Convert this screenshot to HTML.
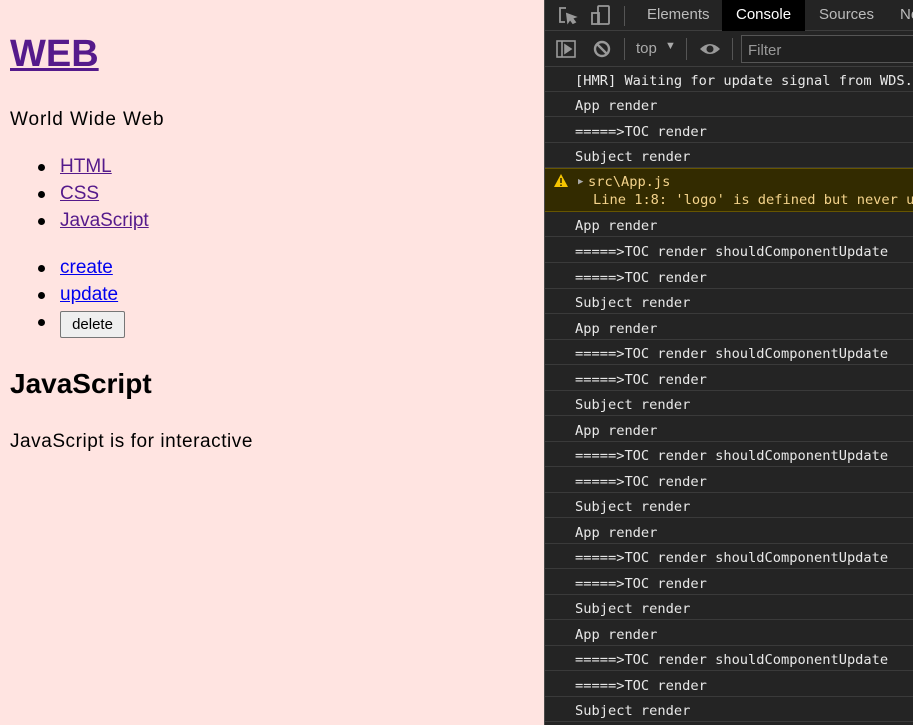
<!DOCTYPE html>
<html><head><meta charset="utf-8"><style>
*{margin:0;padding:0;box-sizing:border-box}
body{width:913px;height:725px;overflow:hidden;background:#ffe4e1;font-family:"Liberation Sans","Noto Sans CJK KR",sans-serif;position:relative}
.a{position:absolute;white-space:nowrap}
.v{color:#551a8b;text-decoration:underline}
.b{color:#0000ee;text-decoration:underline}
.dot{position:absolute;width:7px;height:7px;border-radius:50%;background:#000}
#dt{position:absolute;left:544px;top:0;width:369px;height:725px;background:#242424;border-left:1px solid #4a4a4a;color:#e8e8e8;font-family:"DejaVu Sans Mono","Liberation Mono",monospace;font-size:13.7px}
.row{position:absolute;left:0;width:369px;border-bottom:1px solid #3a3a3a;padding-left:30px;padding-top:2px;white-space:nowrap;overflow:hidden}
</style></head><body>
<div class="a v" style="left:10px;top:29px;font-size:38px;font-weight:bold;line-height:50px">WEB</div>
<div class="a" style="left:10px;top:109px;font-size:19px;letter-spacing:0.9px">World Wide Web</div>
<div class="dot" style="left:38px;top:164px"></div><div class="a v" style="left:60px;top:156px;font-size:19px">HTML</div>
<div class="dot" style="left:38px;top:191px"></div><div class="a v" style="left:60px;top:183px;font-size:19px">CSS</div>
<div class="dot" style="left:38px;top:218px"></div><div class="a v" style="left:60px;top:210px;font-size:19px">JavaScript</div>
<div class="dot" style="left:38px;top:265px"></div><div class="a b" style="left:60px;top:257px;font-size:19px">create</div>
<div class="dot" style="left:38px;top:292px"></div><div class="a b" style="left:60px;top:284px;font-size:19px">update</div>
<div class="dot" style="left:38px;top:319px"></div>
<div class="a" style="left:60px;top:311px;width:65px;height:27px;border:1px solid #767676;border-radius:2px;background:#efefef;font-size:15px;text-align:center;line-height:25px">delete</div>
<div class="a" style="left:10px;top:368px;font-size:28px;font-weight:bold">JavaScript</div>
<div class="a" style="left:10px;top:431px;font-size:19px;letter-spacing:0.55px">JavaScript is for interactive</div>

<div id="dt">
<div style="position:absolute;left:0;top:0;width:369px;height:31px;border-bottom:1px solid #3d3d3d;font-family:'Liberation Sans',sans-serif;font-size:15px;color:#bbb">
<svg style="position:absolute;left:13px;top:6px" width="20" height="20" viewBox="0 0 20 20" fill="none" stroke="#999" stroke-width="1.8"><path d="M8 2H2v14h5"/><path d="M9 8l8 3-3 1 3 4-2 1-3-4-2 3z" fill="#999"/></svg>
<svg style="position:absolute;left:45px;top:4px" width="22" height="22" viewBox="0 0 22 22" fill="none" stroke="#999" stroke-width="1.8"><rect x="8" y="2" width="11" height="18" rx="1"/><rect x="2" y="9" width="7" height="11"/></svg>
<div style="position:absolute;left:79px;top:6px;width:1px;height:20px;background:#555"></div>
<div class="a" style="left:102px;top:6px">Elements</div>
<div style="position:absolute;left:177px;top:0;width:83px;height:31px;background:#000"></div>
<div class="a" style="left:191px;top:6px;color:#fff">Console</div>
<div class="a" style="left:274px;top:6px">Sources</div>
<div class="a" style="left:355px;top:6px">Ne</div>
</div>
<div style="position:absolute;left:0;top:32px;width:369px;height:35px;border-bottom:1px solid #3d3d3d;font-family:'Liberation Sans',sans-serif;color:#aaa">
<svg style="position:absolute;left:11px;top:8px" width="20" height="18" viewBox="0 0 20 18" fill="none" stroke="#999" stroke-width="1.6"><rect x="1" y="1" width="18" height="16"/><path d="M6 1v16"/><path d="M9 5l6 4-6 4z" fill="#999"/></svg>
<svg style="position:absolute;left:48px;top:8px" width="18" height="18" viewBox="0 0 18 18" fill="none" stroke="#999" stroke-width="2.4"><circle cx="9" cy="9" r="7"/><path d="M4 4l10 10"/></svg>
<div style="position:absolute;left:79px;top:6px;width:1px;height:22px;background:#555"></div>
<div class="a" style="left:91px;top:8px;font-size:15px">top</div>
<div class="a" style="left:120px;top:8px;font-size:11px">▼</div>
<div style="position:absolute;left:141px;top:6px;width:1px;height:22px;background:#555"></div>
<svg style="position:absolute;left:154px;top:10px" width="22" height="14" viewBox="0 0 22 14"><path d="M1 7Q11 -3 21 7Q11 17 1 7z" fill="#999"/><circle cx="11" cy="7" r="3.5" fill="#242424"/></svg>
<div style="position:absolute;left:187px;top:6px;width:1px;height:22px;background:#555"></div>
<div style="position:absolute;left:196px;top:3px;width:180px;height:28px;border:1px solid #555;background:#202020;padding:6px 6px;font-size:15px;color:#999">Filter</div>
</div>
<div class="row" style="top:67px;height:25px;line-height:25px">[HMR] Waiting for update signal from WDS...</div>
<div class="row" style="top:92px;height:25px;line-height:25px">App render</div>
<div class="row" style="top:117px;height:26px;line-height:26px">=====&gt;TOC render</div>
<div class="row" style="top:143px;height:25px;line-height:25px">Subject render</div>
<div class="row" style="top:168px;height:44px;background:#332b00;border-top:1px solid #665500;border-bottom:1px solid #665500;color:#f4d38b;padding-left:0">
<svg style="position:absolute;left:9px;top:5px" width="14" height="13" viewBox="0 0 14 13"><path d="M7 0L14 13H0z" fill="#f5c400"/><path d="M7 4v5M7 10.5v1.5" stroke="#332b00" stroke-width="1.6"/></svg>
<div class="a" style="left:33px;top:8px;color:#aaa;font-size:9px">▶</div>
<div class="a" style="left:43px;top:5px">src\App.js</div>
<div class="a" style="left:48px;top:23px">Line 1:8:  'logo' is defined but never used</div>
</div>
<div class="row" style="top:212px;height:25px;line-height:25px">App render</div>
<div class="row" style="top:237px;height:26px;line-height:26px">=====&gt;TOC render shouldComponentUpdate</div>
<div class="row" style="top:263px;height:26px;line-height:26px">=====&gt;TOC render</div>
<div class="row" style="top:289px;height:25px;line-height:25px">Subject render</div>
<div class="row" style="top:314px;height:26px;line-height:26px">App render</div>
<div class="row" style="top:340px;height:25px;line-height:25px">=====&gt;TOC render shouldComponentUpdate</div>
<div class="row" style="top:365px;height:26px;line-height:26px">=====&gt;TOC render</div>
<div class="row" style="top:391px;height:25px;line-height:25px">Subject render</div>
<div class="row" style="top:416px;height:26px;line-height:26px">App render</div>
<div class="row" style="top:442px;height:25px;line-height:25px">=====&gt;TOC render shouldComponentUpdate</div>
<div class="row" style="top:467px;height:26px;line-height:26px">=====&gt;TOC render</div>
<div class="row" style="top:493px;height:25px;line-height:25px">Subject render</div>
<div class="row" style="top:518px;height:26px;line-height:26px">App render</div>
<div class="row" style="top:544px;height:25px;line-height:25px">=====&gt;TOC render shouldComponentUpdate</div>
<div class="row" style="top:569px;height:26px;line-height:26px">=====&gt;TOC render</div>
<div class="row" style="top:595px;height:25px;line-height:25px">Subject render</div>
<div class="row" style="top:620px;height:26px;line-height:26px">App render</div>
<div class="row" style="top:646px;height:25px;line-height:25px">=====&gt;TOC render shouldComponentUpdate</div>
<div class="row" style="top:671px;height:26px;line-height:26px">=====&gt;TOC render</div>
<div class="row" style="top:697px;height:25px;line-height:25px">Subject render</div>
</div>
</body></html>
